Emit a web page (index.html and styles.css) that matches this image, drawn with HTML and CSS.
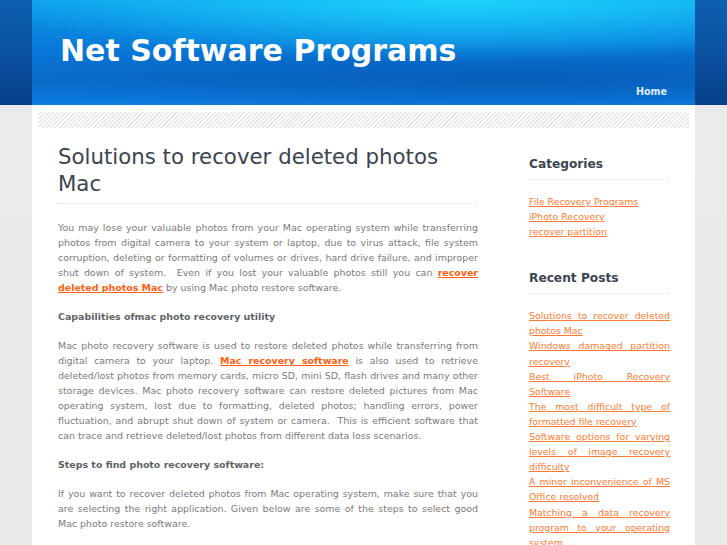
FILE: index.html
```html
<!DOCTYPE html>
<html>
<head>
<meta charset="utf-8">
<link rel="stylesheet" href="styles.css">
</head>
<body>
<div class="page">
  <header class="header">
    <h1 class="site-title">Net Software Programs</h1>
    <nav class="nav"><a href="#">Home</a></nav>
  </header>
  <div class="stripe"></div>
  <div class="columns">
    <main class="main">
      <h2 class="post-title">Solutions to recover deleted photos Mac</h2>
      <div class="post">
        <p>You may lose your valuable photos from your Mac operating system while transferring photos from digital camera to your system or laptop, due to virus attack, file system corruption, deleting or formatting of volumes or drives, hard drive failure, and improper shut down of system.&nbsp; Even if you lost your valuable photos still you can <a class="strong-link" href="#">recover deleted photos Mac</a> by using Mac photo restore software.</p>
        <p class="sub">Capabilities ofmac photo recovery utility</p>
        <p>Mac photo recovery software is used to restore deleted photos while transferring from digital camera to your laptop. <a class="strong-link" href="#">Mac recovery software</a> is also used to retrieve deleted/lost photos from memory cards, micro SD, mini SD, flash drives and many other storage devices. Mac photo recovery software can restore deleted pictures from Mac operating system, lost due to formatting, deleted photos; handling errors, power fluctuation, and abrupt shut down of system or camera.&nbsp; This is efficient software that can trace and retrieve deleted/lost photos from different data loss scenarios.</p>
        <p class="sub">Steps to find photo recovery software:</p>
        <p>If you want to recover deleted photos from Mac operating system, make sure that you are selecting the right application. Given below are some of the steps to select good Mac photo restore software.</p>
      </div>
    </main>
    <aside class="sidebar">
      <section class="widget">
        <h3 class="widget-title">Categories</h3>
        <ul class="links">
          <li><a href="#">File Recovery Programs</a></li>
          <li><a href="#">iPhoto Recovery</a></li>
          <li><a href="#">recover partition</a></li>
        </ul>
      </section>
      <section class="widget">
        <h3 class="widget-title">Recent Posts</h3>
        <ul class="links justify">
          <li><a href="#">Solutions to recover deleted photos Mac</a></li>
          <li><a href="#">Windows damaged partition recovery</a></li>
          <li><a href="#">Best iPhoto Recovery Software</a></li>
          <li><a href="#">The most difficult type of formatted file recovery</a></li>
          <li><a href="#">Software options for varying levels of image recovery difficulty</a></li>
          <li><a href="#">A minor inconvenience of MS Office resolved</a></li>
          <li><a href="#">Matching a data recovery program to your operating system</a></li>
        </ul>
      </section>
    </aside>
  </div>
</div>
</body>
</html>
```
FILE: styles.css
```css
html, body {
  margin: 0;
  padding: 0;
}
body {
  font-family: "DejaVu Sans", Verdana, sans-serif;
  background:
    linear-gradient(180deg, #0d5fb0 0px, #0a4f9e 60px, #063f88 105px, #ebebeb 105px, #e9e9e9 100%);
  min-height: 545px;
}
.page {
  width: 663px;
  margin: 0 auto;
  background: #ffffff;
  min-height: 545px;
}
.header {
  height: 105px;
  position: relative;
  background:
    radial-gradient(ellipse 460px 62px at 430px 0px, rgba(30, 215, 255, 0.9), rgba(30, 215, 255, 0) 100%),
    radial-gradient(ellipse 520px 38px at 480px 78px, rgba(3, 78, 168, 0.5), rgba(3, 78, 168, 0) 100%),
    linear-gradient(180deg, #0ea2ec 0px, #0a86e0 30px, #0874d6 55px, #0a6cc8 80px, #0b78dc 100px, #0b80e2 105px);
  overflow: hidden;
}
.site-title {
  margin: 0;
  padding: 33px 0 0 28px;
  font-family: "DejaVu Sans", Verdana, sans-serif;
  font-weight: bold;
  font-size: 30px;
  line-height: 36px;
  color: #ffffff;
}
.nav {
  position: absolute;
  right: 28px;
  bottom: 6px;
}
.nav a {
  color: #dfeaff;
  font-size: 9.6px;
  font-weight: bold;
  text-decoration: none;
}
.stripe {
  margin: 7px 6px 0 6px;
  height: 16px;
  background: repeating-linear-gradient(135deg, #ffffff 0px, #ffffff 1.5px, #e6e6e6 1.5px, #e6e6e6 3px);
}
.columns {
  display: flex;
  padding: 0 25px 0 26px;
  gap: 51px;
}
.main {
  width: 420px;
  flex: none;
}
.post-title {
  margin: 15px 0 0 0;
  padding: 0 0 6px 0;
  font-weight: normal;
  font-size: 21.3px;
  line-height: 27px;
  color: #3b4450;
  border-bottom: 1px dotted #e3e3e3;
}
.post {
  padding-top: 16px;
}
.post p {
  margin: 0 0 14px 0;
  font-size: 9.45px;
  line-height: 15px;
  color: #7a7a7a;
  text-align: justify;
}
.post p.sub {
  font-weight: bold;
  color: #5f6368;
}
.strong-link {
  color: #ff6010;
  font-weight: bold;
  text-decoration: underline;
}
.sidebar {
  width: 141px;
  flex: none;
}
.widget {
  margin-top: 28px;
}
.widget + .widget {
  margin-top: 31px;
}
.widget-title {
  margin: 0;
  padding-bottom: 6px;
  font-size: 12.2px;
  line-height: 17px;
  font-weight: bold;
  color: #3b4450;
  border-bottom: 1px dotted #e3e3e3;
}
.links {
  list-style: none;
  margin: 14px 0 0 0;
  padding: 0;
}
.links li {
  font-size: 9.35px;
  line-height: 15.1px;
}
.links.justify li {
  text-align: justify;
}
.links a {
  color: #ff7a30;
  text-decoration: underline;
}
```
